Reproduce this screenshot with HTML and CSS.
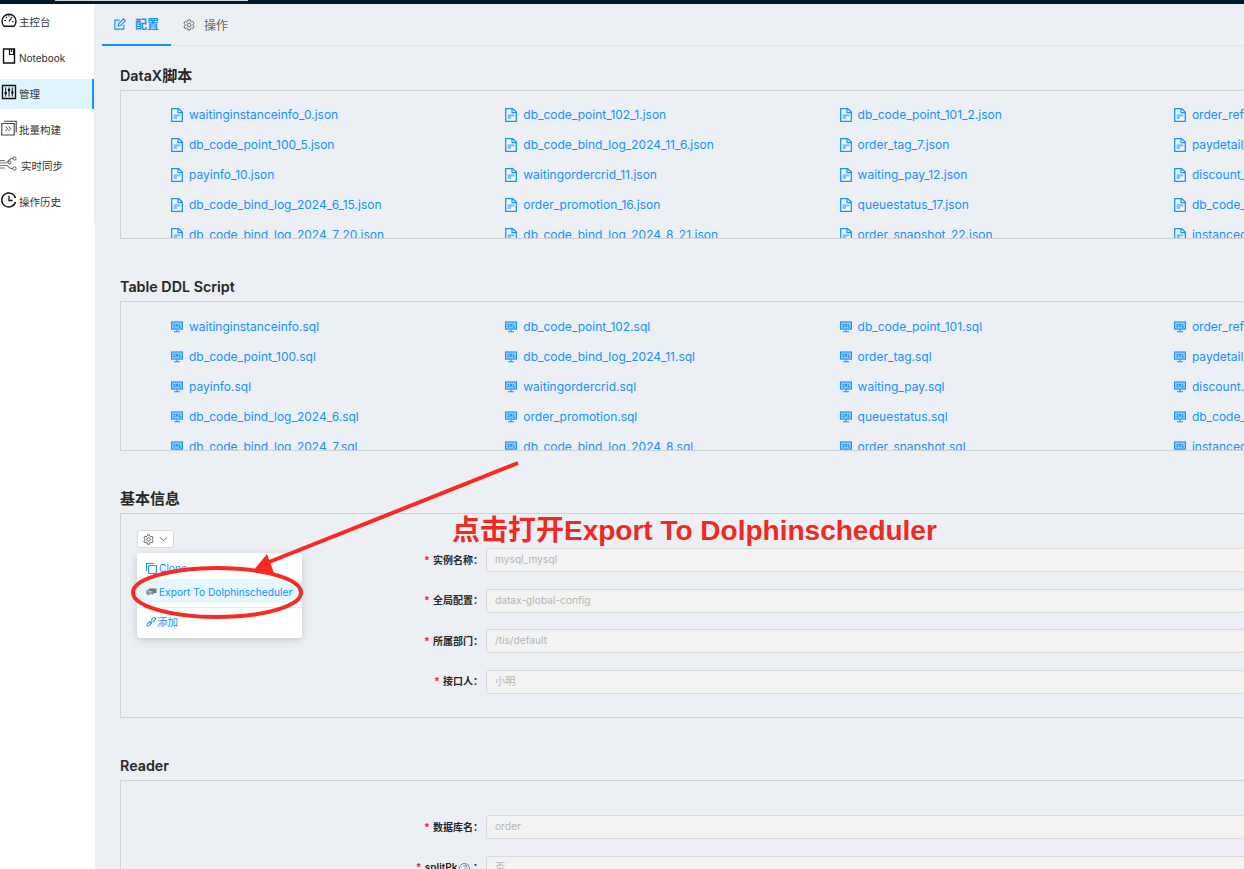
FILE: index.html
```html
<!DOCTYPE html>
<html lang="zh">
<head>
<meta charset="utf-8">
<title>管理</title>
<link rel="stylesheet" href="styles.css">
</head>
<body>
<svg class="sprites" aria-hidden="true">
  <symbol id="i-file" viewBox="0 0 12 14">
    <path d="M1 .7h6.600L11.300 4v9.300H.7V.7z" fill="#fff" fill-opacity=".55" stroke="#1890ff" stroke-width="1.300"/>
    <path d="M7 1v3.600h4" fill="none" stroke="#1890ff" stroke-width="1.200"/>
    <path d="M2.600 6.200h6.800v2.400H6v2.400H2.600z" fill="#7fc1ff"/>
  </symbol>
  <symbol id="i-sql" viewBox="0 0 14 13">
    <rect x=".6" y=".6" width="12.800" height="8.400" fill="#8cc8ff" stroke="#1890ff" stroke-width="1.200"/>
    <path d="M3 3h2v1.400H3zM6 3h2v3H6zM9.200 3h1v3h1.400v1H9.200zM3 5.400h2v1.400H3z" fill="#1890ff"/>
    <path d="M7 9v2.400M3.500 12h7" stroke="#1890ff" stroke-width="1.200" fill="none"/>
  </symbol>
  <symbol id="i-gear" viewBox="0 0 14 14">
    <path d="M5.700 1h2.600l.4 1.800 1.200.7 1.800-.6 1.300 2.200-1.400 1.200v1.400l1.400 1.200-1.300 2.200-1.800-.6-1.200.7-.4 1.800H5.700l-.4-1.800-1.200-.7-1.800.6L1 8.900l1.400-1.200V6.300L1 5.100l1.300-2.200 1.800.6 1.200-.7z" fill="none" stroke="currentColor" stroke-width="1.100"/>
    <circle cx="7" cy="7" r="2.200" fill="none" stroke="currentColor" stroke-width="1.100"/>
  </symbol>
</svg>

<div class="topbar"><div class="topbar-strip"></div></div>
<div class="shell">
  <aside class="side">
    <nav class="nav">
      <a class="nav-item">
        <svg class="nav-icon" viewBox="0 0 16 16"><path d="M3 14.200A7 7 0 1 1 13 14.200z" fill="none" stroke="#111" stroke-width="1.400"/><path d="M8 9.500l3-4.500M3.500 8.500h1.500M11 9.500h1.500M5 5l.8.9M8 3.200v1.300" fill="none" stroke="#111" stroke-width="1.200"/></svg>
        <span>主控台</span>
      </a>
      <a class="nav-item nav-latin">
        <svg class="nav-icon" viewBox="0 0 16 16"><path d="M2.500 1h11v14h-11z" fill="none" stroke="#111" stroke-width="1.400"/><path d="M8.500 1v5.500h4V1M10.500 1v3" fill="none" stroke="#111" stroke-width="1.100"/></svg>
        <span>Notebook</span>
      </a>
      <a class="nav-item active">
        <svg class="nav-icon" viewBox="0 0 16 16"><path d="M1.500 1.500h13v13h-13z" fill="none" stroke="#111" stroke-width="1.400"/><path d="M4.700 3.500v9M8 3.500v9M11.300 3.500v9" stroke="#111" stroke-width="1" fill="none"/><circle cx="4.700" cy="9" r="1.300" fill="#111"/><circle cx="8" cy="6" r="1.300" fill="#111"/><circle cx="11.300" cy="8.500" r="1.300" fill="#111"/></svg>
        <span>管理</span>
      </a>
      <a class="nav-item">
        <svg class="nav-icon" viewBox="0 0 16 16"><path d="M.8 3.500h12.400V15H.8zM3 1.200h12.200v11.300" fill="none" stroke="#444" stroke-width="1.100"/><path d="M4.500 6.500l2.200 2.200-2.200 2.200M7.500 6.500l2.200 2.200-2.200 2.200" fill="none" stroke="#444" stroke-width="1"/></svg>
        <span>批量构建</span>
      </a>
      <a class="nav-item nav-wide">
        <svg class="nav-icon nav-icon-wide" viewBox="0 0 17 16"><path d="M0 7h6l5-4.500h2M0 9.500h7l3.500 3h2.500M0 4.700h5M0 12h5" fill="none" stroke="#777" stroke-width="1.200"/><circle cx="14.500" cy="2.500" r="1.600" fill="none" stroke="#555" stroke-width="1"/><circle cx="14.500" cy="12.500" r="1.600" fill="none" stroke="#555" stroke-width="1"/><circle cx="9.500" cy="6.500" r="1.400" fill="none" stroke="#555" stroke-width="1"/></svg>
        <span>实时同步</span>
      </a>
      <a class="nav-item">
        <svg class="nav-icon" viewBox="0 0 16 16"><path d="M14.500 6A7 7 0 1 0 14.500 10" fill="none" stroke="#111" stroke-width="1.400"/><path d="M8 3.800V8.500h3.500" fill="none" stroke="#111" stroke-width="1.300"/></svg>
        <span>操作历史</span>
      </a>
    </nav>
  </aside>

  <main class="main">
    <div class="tabs">
      <a class="tab tab-active">
        <svg class="tab-icon" viewBox="0 0 14 14"><path d="M11.500 8v5H1V2.500h5.500" fill="#d6ecff" stroke="#1890ff" stroke-width="1.300"/><path d="M5 9.200l.5-2.700L11 1l2.200 2.200-5.500 5.500z" fill="#ecf6ff" stroke="#1890ff" stroke-width="1.300"/></svg>
        <span>配置</span>
      </a>
      <a class="tab">
        <svg class="tab-icon"><use href="#i-gear"/></svg>
        <span>操作</span>
      </a>
    </div>

    <div class="content">
      <section class="section">
        <h2 class="title">DataX<span class="title-cjk">脚本</span></h2>
        <div class="box box-json">
          <div class="files">
            <a class="file"><svg class="file-icon"><use href="#i-file"/></svg>waitinginstanceinfo_0.json</a>
            <a class="file"><svg class="file-icon"><use href="#i-file"/></svg>db_code_point_102_1.json</a>
            <a class="file"><svg class="file-icon"><use href="#i-file"/></svg>db_code_point_101_2.json</a>
            <a class="file"><svg class="file-icon"><use href="#i-file"/></svg>order_refund_3.json</a>
            <a class="file"><svg class="file-icon"><use href="#i-file"/></svg>db_code_point_100_5.json</a>
            <a class="file"><svg class="file-icon"><use href="#i-file"/></svg>db_code_bind_log_2024_11_6.json</a>
            <a class="file"><svg class="file-icon"><use href="#i-file"/></svg>order_tag_7.json</a>
            <a class="file"><svg class="file-icon"><use href="#i-file"/></svg>paydetail_8.json</a>
            <a class="file"><svg class="file-icon"><use href="#i-file"/></svg>payinfo_10.json</a>
            <a class="file"><svg class="file-icon"><use href="#i-file"/></svg>waitingordercrid_11.json</a>
            <a class="file"><svg class="file-icon"><use href="#i-file"/></svg>waiting_pay_12.json</a>
            <a class="file"><svg class="file-icon"><use href="#i-file"/></svg>discount_13.json</a>
            <a class="file"><svg class="file-icon"><use href="#i-file"/></svg>db_code_bind_log_2024_6_15.json</a>
            <a class="file"><svg class="file-icon"><use href="#i-file"/></svg>order_promotion_16.json</a>
            <a class="file"><svg class="file-icon"><use href="#i-file"/></svg>queuestatus_17.json</a>
            <a class="file"><svg class="file-icon"><use href="#i-file"/></svg>db_code_point_18.json</a>
            <a class="file"><svg class="file-icon"><use href="#i-file"/></svg>db_code_bind_log_2024_7_20.json</a>
            <a class="file"><svg class="file-icon"><use href="#i-file"/></svg>db_code_bind_log_2024_8_21.json</a>
            <a class="file"><svg class="file-icon"><use href="#i-file"/></svg>order_snapshot_22.json</a>
            <a class="file"><svg class="file-icon"><use href="#i-file"/></svg>instanced_23.json</a>
          </div>
        </div>
      </section>

      <section class="section">
        <h2 class="title">Table DDL Script</h2>
        <div class="box box-sql">
          <div class="files">
            <a class="file"><svg class="file-icon"><use href="#i-sql"/></svg>waitinginstanceinfo.sql</a>
            <a class="file"><svg class="file-icon"><use href="#i-sql"/></svg>db_code_point_102.sql</a>
            <a class="file"><svg class="file-icon"><use href="#i-sql"/></svg>db_code_point_101.sql</a>
            <a class="file"><svg class="file-icon"><use href="#i-sql"/></svg>order_refund.sql</a>
            <a class="file"><svg class="file-icon"><use href="#i-sql"/></svg>db_code_point_100.sql</a>
            <a class="file"><svg class="file-icon"><use href="#i-sql"/></svg>db_code_bind_log_2024_11.sql</a>
            <a class="file"><svg class="file-icon"><use href="#i-sql"/></svg>order_tag.sql</a>
            <a class="file"><svg class="file-icon"><use href="#i-sql"/></svg>paydetail.sql</a>
            <a class="file"><svg class="file-icon"><use href="#i-sql"/></svg>payinfo.sql</a>
            <a class="file"><svg class="file-icon"><use href="#i-sql"/></svg>waitingordercrid.sql</a>
            <a class="file"><svg class="file-icon"><use href="#i-sql"/></svg>waiting_pay.sql</a>
            <a class="file"><svg class="file-icon"><use href="#i-sql"/></svg>discount.sql</a>
            <a class="file"><svg class="file-icon"><use href="#i-sql"/></svg>db_code_bind_log_2024_6.sql</a>
            <a class="file"><svg class="file-icon"><use href="#i-sql"/></svg>order_promotion.sql</a>
            <a class="file"><svg class="file-icon"><use href="#i-sql"/></svg>queuestatus.sql</a>
            <a class="file"><svg class="file-icon"><use href="#i-sql"/></svg>db_code_point.sql</a>
            <a class="file"><svg class="file-icon"><use href="#i-sql"/></svg>db_code_bind_log_2024_7.sql</a>
            <a class="file"><svg class="file-icon"><use href="#i-sql"/></svg>db_code_bind_log_2024_8.sql</a>
            <a class="file"><svg class="file-icon"><use href="#i-sql"/></svg>order_snapshot.sql</a>
            <a class="file"><svg class="file-icon"><use href="#i-sql"/></svg>instanced.sql</a>
          </div>
        </div>
      </section>

      <section class="section">
        <h2 class="title title-cjk">基本信息</h2>
        <div class="box box-info">
          <div class="actions">
            <button class="gear-btn" type="button">
              <svg class="gear-icon"><use href="#i-gear"/></svg>
              <svg class="caret" viewBox="0 0 10 6"><path d="M1 1l4 4 4-4" fill="none" stroke="#555" stroke-width="1"/></svg>
            </button>
            <div class="menu">
              <a class="menu-item">
                <svg class="menu-icon" viewBox="0 0 12 12"><path d="M.6 8.500V.6h7.900" fill="none" stroke="#1890ff" stroke-width="1.100"/><rect x="2.800" y="2.800" width="8.600" height="8.600" rx="1" fill="none" stroke="#1890ff" stroke-width="1.200"/></svg>
                <span>Clone</span>
              </a>
              <a class="menu-item menu-hover">
                <svg class="menu-icon" viewBox="0 0 12 12"><path d="M3 1.500h8.500v5H3zM.5 3.500h8v4.300H3.500L2 10V7.800H.5z" fill="#777"/><path d="M2 5h5M2 6.500h5" stroke="#e6f7ff" stroke-width=".7"/></svg>
                <span>Export To Dolphinscheduler</span>
              </a>
              <div class="menu-divider"></div>
              <a class="menu-item menu-tight">
                <svg class="menu-icon" viewBox="0 0 12 12"><path d="M1.500 8.500L4 6l2 2-2.500 2.500a1.400 1.400 0 0 1-2-2zM5.500 4.500L8 2a1.400 1.400 0 0 1 2 2L7.500 6.500" fill="none" stroke="#1890ff" stroke-width="1.100"/><path d="M4 8l3-3" stroke="#1890ff" stroke-width="1.100"/></svg>
                <span>添加</span>
              </a>
            </div>
          </div>
          <div class="form">
            <div class="row"><label class="label"><i class="req">*</i>实例名称：</label><div class="input">mysql_mysql</div></div>
            <div class="row"><label class="label"><i class="req">*</i>全局配置：</label><div class="input">datax-global-config</div></div>
            <div class="row"><label class="label"><i class="req">*</i>所属部门：</label><div class="input">/tis/default</div></div>
            <div class="row"><label class="label"><i class="req">*</i>接口人：</label><div class="input">小明</div></div>
          </div>
        </div>
      </section>

      <section class="section">
        <h2 class="title">Reader</h2>
        <div class="box box-reader">
          <div class="actions-spacer"></div>
          <div class="form">
            <div class="row"><label class="label"><i class="req">*</i>数据库名：</label><div class="input">order</div></div>
            <div class="row"><label class="label"><i class="req">*</i>splitPk<span class="help">?</span> ：</label><div class="input">否</div></div>
          </div>
        </div>
      </section>
    </div>
  </main>
</div>

<svg class="annotation" viewBox="0 0 1244 869" aria-hidden="true">
  <path d="M518 463L264 564" stroke="#fb2a20" stroke-width="4" fill="none"/>
  <path d="M253 571L267 554L274 573z" fill="#fb2a20"/>
  <ellipse cx="217" cy="592.500" rx="84" ry="24.500" fill="none" stroke="#fb2a20" stroke-width="4"/>
</svg>
<div class="note">点击打开Export To Dolphinscheduler</div>
</body>
</html>
```

FILE: styles.css
```css
* { box-sizing: border-box; }
html, body {
  margin: 0;
  height: 869px;
  overflow: hidden;
  background: #eceff3;
  color: #262626;
  font-family: Inter, "Noto Sans CJK SC", "Liberation Sans", sans-serif;
}
body { position: relative; }
.sprites { position: absolute; width: 0; height: 0; }

.topbar { height: 4px; background: #00182b; padding-left: 55px; }
.topbar-strip { height: 1px; width: 193px; background: #d5d7da; }

.shell { display: flex; height: 865px; }
.side { width: 95px; flex: none; background: #fff; }
.nav {
  width: 95px;
  height: 216px;
  border-right: 1px solid #e8e8e8;
}
.nav-item {
  display: flex;
  align-items: center;
  height: 30px;
  margin-top: 6px;
  padding-left: 1px;
  font-size: 10.5px;
  color: #333;
  gap: 2px;
}
.nav-item:first-child { margin-top: 3px; }
.nav-item span { margin-top: -2px; }
.nav-latin { font-size: 10px; }
.nav-latin span { margin-top: 0; }
.nav-icon { width: 16px; height: 16px; flex: none; margin-top: -5px; }
.nav-wide { gap: 4px; padding-left: 0; }
.nav-icon-wide { width: 17px; }
.active { background: #e0f4fe; border-right: 2px solid #1890ff; }

.main { flex: 1; min-width: 0; overflow: hidden; }
.tabs {
  display: flex;
  height: 42px;
  border-bottom: 1px solid #e2e5e9;
  margin-left: 7px;
}
.tab {
  display: flex;
  align-items: center;
  gap: 9px;
  height: 42px;
  padding: 0 12px;
  font-size: 12px;
  color: #666;
}
.tab span { margin-top: -2px; }
.tab-active {
  color: #1890ff;
  font-weight: 700;
  border-bottom: 2px solid #1890ff;
  width: 69px;
}
.tab-icon { width: 12px; height: 12px; flex: none; }

.content {
  width: 1500px;
  padding: 19px 0 0 25px;
  display: flex;
  flex-direction: column;
  gap: 37px;
}
.title {
  margin: 1px 0 4px;
  font-size: 14.3px;
  line-height: 20px;
  font-weight: 600;
  color: #262626;
}
.title-cjk { font-size: 15px; }
.box { border: 1px solid #d0d3d6; overflow: hidden; }
.box-json { height: 149px; padding: 9px 0 0 50px; }
.box-sql { height: 150px; padding: 10px 0 0 50px; }
.box-info { height: 205px; display: flex; overflow: visible; padding-left: 16px; }
.box-reader { height: 200px; display: flex; padding-left: 16px; }

.files { display: grid; grid-template-columns: repeat(4, 334.3px); grid-auto-rows: 30px; }
.file {
  display: flex;
  align-items: center;
  gap: 6px;
  padding-bottom: 1px;
  font-size: 12px;
  color: #1890ff;
  white-space: nowrap;
}
.file-icon { width: 12px; height: 14px; flex: none; }

.actions, .actions-spacer { width: 165px; flex: none; }
.gear-btn {
  display: flex;
  align-items: center;
  justify-content: center;
  gap: 5px;
  width: 37px;
  height: 18px;
  margin-top: 16px;
  padding: 0;
  background: #fff;
  border: 1px solid #d9d9d9;
  border-radius: 3px;
  color: #555;
}
.gear-icon { width: 11px; height: 11px; }
.caret { width: 9px; height: 6px; }
.menu {
  margin-top: 5px;
  height: 85px;
  background: #fff;
  border-radius: 3px;
  box-shadow: 0 2px 8px rgba(0, 0, 0, .16);
  padding-top: 3px;
}
.menu-item {
  display: flex;
  align-items: center;
  gap: 2px;
  height: 24px;
  padding-left: 9px;
  font-size: 10.2px;
  color: #1890ff;
}
.menu-hover { background: #e6f7ff; margin-top: -1px; padding-top: 2px; }
.menu-tight { gap: 0; font-size: 10.500px; }
.menu-icon { width: 11px; height: 11px; flex: none; }
.menu-divider { height: 1px; background: #e8e8e8; margin: 4px 0 1px; }

.form { flex: 1; padding-top: 34px; display: flex; flex-direction: column; gap: 16.67px; }
.row { display: flex; align-items: center; height: 24px; gap: 3px; }
.label {
  width: 181px;
  flex: none;
  padding-bottom: 2px;
  text-align: right;
  font-size: 10px;
  font-weight: 600;
  color: #262626;
  white-space: nowrap;
}
.req { color: #f5222d; font-style: normal; font-family: "Liberation Sans", sans-serif; margin-right: 4px; font-size: 11px; }
.help {
  display: inline-block;
  width: 11px;
  height: 11px;
  margin-left: 2px;
  border: 1px solid #1890ff;
  border-radius: 50%;
  color: #1890ff;
  font-size: 8px;
  font-weight: 400;
  line-height: 9px;
  text-align: center;
}
.input {
  flex: 1;
  height: 24px;
  line-height: 20px;
  padding: 0 8px;
  background: #f3f3f3;
  border: 1px solid #d9d9d9;
  border-radius: 3px;
  font-size: 10.2px;
  color: #b5b5b5;
}

.annotation { position: absolute; left: 0; top: 0; width: 1244px; height: 869px; pointer-events: none; }
.note {
  position: absolute;
  left: 452px;
  top: 513px;
  font-family: "Liberation Sans", "Noto Sans CJK SC", sans-serif;
  font-size: 28px;
  line-height: 36px;
  font-weight: 700;
  color: #ee2a22;
  white-space: nowrap;
}
```
